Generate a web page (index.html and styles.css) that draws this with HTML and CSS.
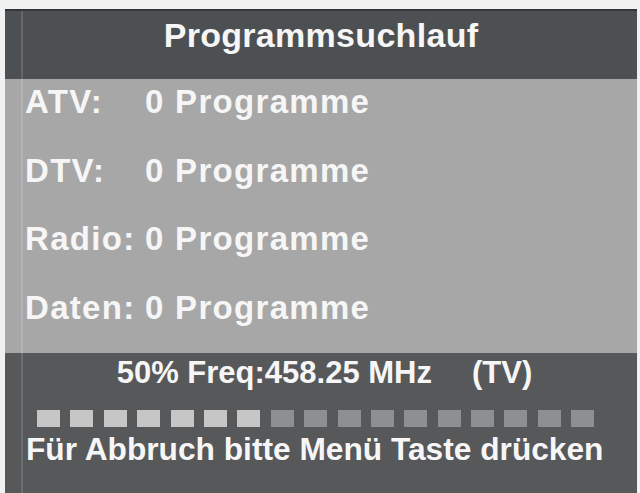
FILE: index.html
```html
<!DOCTYPE html>
<html lang="de">
<head>
<meta charset="utf-8">
<title>Programmsuchlauf</title>
<link rel="stylesheet" href="styles.css">
</head>
<body>
<div class="panel">
  <div class="title">Programmsuchlauf</div>
  <div class="list">
    <div class="row"><span class="label">ATV:</span><span class="value">0 Programme</span></div>
    <div class="row"><span class="label">DTV:</span><span class="value">0 Programme</span></div>
    <div class="row"><span class="label">Radio:</span><span class="value">0 Programme</span></div>
    <div class="row"><span class="label">Daten:</span><span class="value">0 Programme</span></div>
  </div>
  <div class="status">
    <div class="freq"><span>50% Freq:458.25 MHz</span><span class="mode">(TV)</span></div>
    <div class="progress">
      <span class="sq on"></span><span class="sq on"></span><span class="sq on"></span><span class="sq on"></span><span class="sq on"></span><span class="sq on"></span><span class="sq on"></span>
      <span class="sq"></span><span class="sq"></span><span class="sq"></span><span class="sq"></span><span class="sq"></span><span class="sq"></span><span class="sq"></span><span class="sq"></span><span class="sq"></span><span class="sq"></span>
    </div>
    <div class="hint">Für Abbruch bitte Menü Taste drücken</div>
  </div>
</div>
</body>
</html>
```
FILE: styles.css
```css
html, body {
  margin: 0;
  padding: 0;
}
body {
  background: #f1f1f1;
  font-family: "Liberation Sans", Arial, sans-serif;
  font-weight: bold;
  color: #f6f6f6;
  overflow: hidden;
}
.panel {
  position: relative;
  margin: 9px 3px 0 5px;
  height: 484px;
  display: flex;
  flex-direction: column;
  border-top: 2px solid #34373a;
  box-sizing: border-box;
}
.panel::before {
  content: "";
  position: absolute;
  left: 16px;
  top: 0;
  bottom: 0;
  width: 2px;
  background: rgba(255, 255, 255, 0.14);
}
.title {
  height: 68px;
  background: #4c5053;
  text-align: center;
  font-size: 34px;
  line-height: 48px;
  letter-spacing: 0.3px;
}
.list {
  height: 274px;
  background: #a7a7a7;
  display: flex;
  flex-direction: column;
}
.row {
  height: 68.5px;
  display: flex;
  padding-left: 20px;
  font-size: 33px;
  line-height: 45px;
  letter-spacing: 1.3px;
}
.label {
  width: 120px;
}
.status {
  flex: 1;
  background: #56585a;
  padding: 2px 0 0 21px;
}
.freq {
  display: flex;
  justify-content: center;
  gap: 40px;
  font-size: 31px;
  line-height: 36px;
  padding-right: 14px;
}
.progress {
  display: flex;
  gap: 10.4px;
  margin: 19px 0 0 11px;
  height: 17px;
}
.sq {
  width: 23px;
  height: 17px;
  background: #8d8f90;
}
.sq.on {
  background: #c6c6c6;
}
.hint {
  margin-top: 4px;
  font-size: 31.7px;
  line-height: 36px;
}
```
